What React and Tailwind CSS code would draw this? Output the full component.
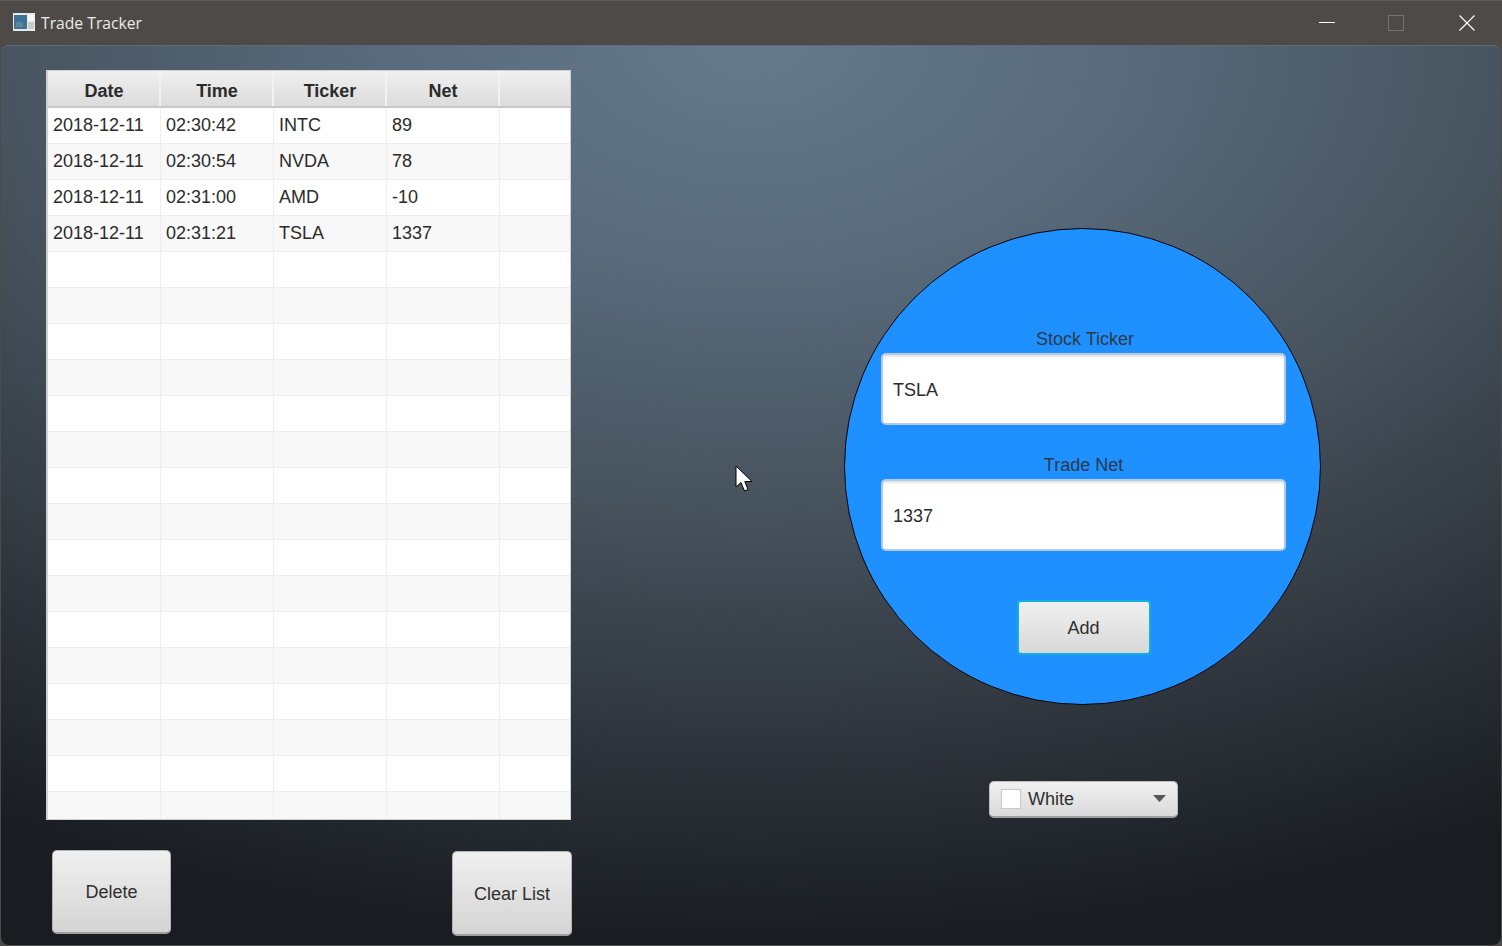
const rows = [
  ['2018-12-11', '02:30:42', 'INTC', '89'],
  ['2018-12-11', '02:30:54', 'NVDA', '78'],
  ['2018-12-11', '02:31:00', 'AMD', '-10'],
  ['2018-12-11', '02:31:21', 'TSLA', '1337'],
];
const headers = ['Date', 'Time', 'Ticker', 'Net'];
const emptyRows = Array.from({ length: 16 }, () => ['', '', '', '']);
const allRows = [...rows, ...emptyRows];

const grid = 'grid grid-cols-[113px_113px_113px_113px_70px]';

function Table() {
  return (
    <div className="w-[525px] h-[750px] overflow-hidden bg-white border border-l-2 border-[#d0d0d0]">
      <div className={`${grid} h-[37px] border-b-2 border-[#c8c8c8] bg-gradient-to-b from-[#f0f0f0] to-[#dcdcdc]`}>
        {headers.map((h) => (
          <div key={h} className="flex items-center justify-center border-r-2 border-[#f2f2f2] font-bold text-[18px] text-[#2b2b2b] pt-[5px] pl-[1px]">
            {h}
          </div>
        ))}
        <div />
      </div>
      {allRows.map((row, i) => (
        <div key={i} className={`${grid} h-[36px] border-b border-[#eeeeee] ${i % 2 ? 'bg-[#f8f8f8]' : 'bg-white'}`}>
          {row.map((cell, j) => (
            <div key={j} className="flex items-center pl-[5px] border-r border-[#eeeeee] text-[18px] text-[#2b2b2b]">
              {cell}
            </div>
          ))}
          <div />
        </div>
      ))}
    </div>
  );
}

function GrayButton({ className, children }) {
  return (
    <button className={`flex items-center justify-center rounded-[5px] border border-[#b4b4b4] border-b-2 border-b-[#a0a0a0] bg-gradient-to-b from-[#f0f0f0] to-[#d4d4d4] text-[18px] text-[#2f2f2f] ${className}`}>
      {children}
    </button>
  );
}

function Field({ label, value, labelClass }) {
  return (
    <div className="flex flex-col items-center">
      <div className={`h-[26px] text-[18px] leading-[24px] text-[#2b3a4a] ${labelClass}`}>{label}</div>
      <div className="flex items-center w-[405px] h-[72px] pl-[10px] pt-[2px] rounded-[5px] bg-white border-2 border-[#b4cae2] shadow-[inset_0_2px_2px_#e4e4e4] text-[18px] text-[#2b2b2b]">
        {value}
      </div>
    </div>
  );
}

export default function App() {
  return (
    <div className="relative w-[1502px] h-[946px] overflow-hidden flex flex-col bg-[#4d4a47] font-['Liberation_Sans',Arial,sans-serif]">
      {/* title bar */}
      <div className="h-[45px] shrink-0 flex items-center border-t border-[#5f5d5a] pl-[13px]">
        <svg width="22" height="18" viewBox="0 0 22 18" className="mb-[3px]">
          <rect width="22" height="18" fill="#e8e8e8" />
          <rect x="1" y="2" width="13" height="14" fill="#3f7396" />
          <rect x="3" y="9" width="7" height="5" fill="#58899a" />
          <rect x="15" y="2" width="6" height="6" fill="#f8f8f8" />
          <rect x="15" y="9" width="6" height="7" fill="#c9cccc" />
        </svg>
        <span className="ml-[6px] pt-[1px] font-['Open_Sans',sans-serif] text-[15.7px] text-[#ebebeb]">Trade Tracker</span>
        <div className="ml-auto flex items-center">
          <svg width="16" height="16" viewBox="0 0 16 16" className="mr-[53px]">
            <path d="M0 7.5H16" stroke="#fff" strokeWidth="1" />
          </svg>
          <svg width="16" height="16" viewBox="0 0 16 16" className="mr-[55px]">
            <rect x="0.5" y="0.5" width="15" height="15" fill="none" stroke="#767472" strokeWidth="1" />
          </svg>
          <svg width="16" height="16" viewBox="0 0 16 16" className="mr-[27px]">
            <path d="M0.5 0.5L15.5 15.5M15.5 0.5L0.5 15.5" stroke="#fff" strokeWidth="1.2" />
          </svg>
        </div>
      </div>

      {/* window body */}
      <div className="flex-1 mx-[1px] mb-[1px] rounded-[8px] border-t border-[#5d6b78] flex bg-[radial-gradient(ellipse_1500px_900px_at_750px_0px,#667a8c_0%,#586a7b_25%,#48545f_50%,#2e343b_78%,#191d22_100%)]">
        {/* table side */}
        <div className="w-[599px] shrink-0 pl-[45px] pt-[24px] flex flex-col">
          <Table />
          <div className="flex justify-between items-start mt-[30px] pl-[6px] w-[526px]">
            <GrayButton className="w-[119px] h-[84px] pt-[1px]">Delete</GrayButton>
            <GrayButton className="w-[120px] h-[85px] mt-[1px] pt-[3px]">Clear List</GrayButton>
          </div>
        </div>

        {/* form side */}
        <div className="flex flex-col items-center pl-[244px] pt-[182px]">
          <div className="w-[477px] h-[477px] rounded-full bg-[#1e90ff] border border-black flex flex-col items-center pl-[2px] pt-[98px]">
            <Field label="Stock Ticker" value="TSLA" labelClass="ml-[3px]" />
            <div className="h-[28px]" />
            <Field label="Trade Net" value="1337" />
            <button className="mt-[49px] w-[134px] h-[55px] pt-[2px] flex items-center justify-center rounded-[4px] border-2 border-[#12b0d8] bg-gradient-to-b from-[#f0f0f0] to-[#d8d8d8] text-[18px] text-[#2f2f2f]">
              Add
            </button>
          </div>
          <div className="mt-[76px] ml-[2px] w-[189px] h-[37px] flex items-center pl-[11px] rounded-[5px] border border-[#bdbdbd] border-b-2 border-b-[#a0a0a0] bg-gradient-to-b from-[#f0f0f0] to-[#dadada] text-[18px] text-[#2f2f2f]">
            <span className="w-[20px] h-[20px] bg-white border border-[#c8c8c8]" />
            <span className="ml-[7px]">White</span>
            <svg width="13" height="7" viewBox="0 0 13 7" className="ml-auto mr-[11px] mb-[2px]">
              <path d="M0 0H13L6.5 7Z" fill="#555" />
            </svg>
          </div>
        </div>
      </div>

      {/* mouse pointer */}
      <svg width="20" height="28" viewBox="0 0 20 28" className="absolute left-[735px] top-[465px]">
        <path d="M1 1V22L6 17.5L9.5 26L13 24.5L9.8 16.5H17Z" fill="#fff" stroke="#000" strokeWidth="1" />
      </svg>
    </div>
  );
}
